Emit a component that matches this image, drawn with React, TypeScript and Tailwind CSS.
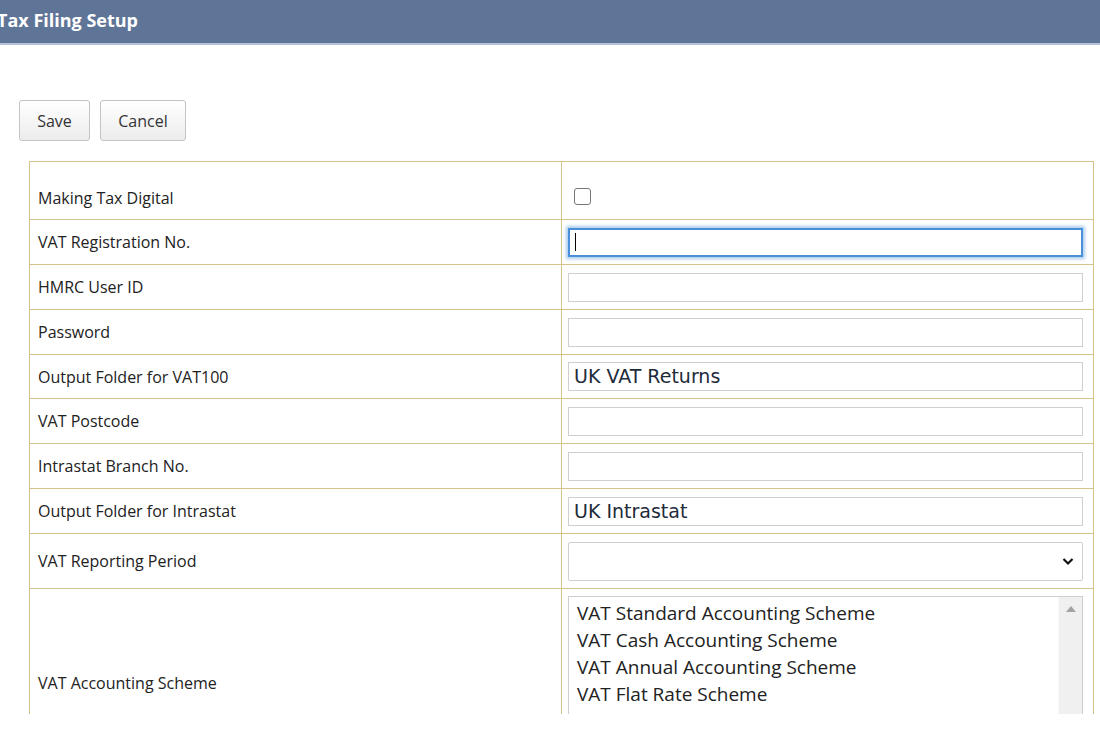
import React from "react";

const sans = { fontFamily: '"Open Sans", "Liberation Sans", sans-serif' };

const rows: { label: string; value?: string; focus?: boolean; h: string }[] = [
  { label: "VAT Registration No.", focus: true, h: "h-[45px]" },
  { label: "HMRC User ID", h: "h-[45px]" },
  { label: "Password", h: "h-[45px]" },
  { label: "Output Folder for VAT100", value: "UK VAT Returns", h: "h-[44px]" },
  { label: "VAT Postcode", h: "h-[45px]" },
  { label: "Intrastat Branch No.", h: "h-[45px]" },
  { label: "Output Folder for Intrastat", value: "UK Intrastat", h: "h-[45px]" },
];

const schemes = [
  "VAT Standard Accounting Scheme",
  "VAT Cash Accounting Scheme",
  "VAT Annual Accounting Scheme",
  "VAT Flat Rate Scheme",
  "VAT Retail Scheme",
  "VAT Margin Scheme",
];

function TextBox({ value, focus }: { value?: string; focus?: boolean }) {
  return (
    <div
      className={
        "relative flex h-[29px] w-[515px] items-center bg-white px-[5px] text-[19px] text-[#1d2b3a] " +
        (focus
          ? "border-2 border-[#4a90d9] shadow-[0_0_3px_2px_rgba(74,144,217,0.45)]"
          : "border border-[#cfcfcf]")
      }
      style={{ fontFamily: '"DejaVu Sans", Verdana, sans-serif' }}
    >
      {focus && <span className="h-[18px] w-px bg-black" />}
      {value}
    </div>
  );
}

export default function App() {
  return (
    <div className="h-[714px] overflow-hidden bg-white" style={sans}>
      {/* title bar */}
      <div className="flex h-[45px] items-center border-b-2 border-[#b4c3d9] bg-[#5f7597]">
        <h1 className="ml-[-3px] pb-[3px] text-[18px] font-bold text-white">Tax Filing Setup</h1>
      </div>

      {/* actions */}
      <div className="ml-[19px] mt-[55px] flex gap-[10px]">
        <button className="h-[41px] w-[71px] rounded-[3px] border border-[#c4c4c4] bg-gradient-to-b from-white to-[#ececec] text-[16px] text-[#333]">
          Save
        </button>
        <button className="h-[41px] w-[86px] rounded-[3px] border border-[#c4c4c4] bg-gradient-to-b from-white to-[#ececec] text-[16px] text-[#333]">
          Cancel
        </button>
      </div>

      <table className="ml-[29px] mt-[20px] w-[1064px] table-fixed border-collapse text-[16px] text-[#222]">
        <colgroup>
          <col className="w-[532px]" />
          <col className="w-[532px]" />
        </colgroup>
        <tbody>
          <tr className="h-[58px]">
            <td className="border border-[#d4c48c] px-[8px] pt-[14px]">Making Tax Digital</td>
            <td className="border border-[#d4c48c] px-[12px] pt-[12px]">
              <div className="h-[17px] w-[17px] rounded-[3px] border border-[#767676] bg-white" />
            </td>
          </tr>
          {rows.map((r) => (
            <tr key={r.label} className={r.h}>
              <td className="border border-[#d4c48c] px-[8px]">{r.label}</td>
              <td className="border border-[#d4c48c] px-[6px]">
                <TextBox value={r.value} focus={r.focus} />
              </td>
            </tr>
          ))}
          <tr className="h-[55px]">
            <td className="border border-[#d4c48c] px-[8px]">VAT Reporting Period</td>
            <td className="border border-[#d4c48c] px-[6px]">
              <div className="flex h-[39px] w-[515px] items-center justify-end rounded-[2px] border border-[#cfcfcf] bg-white pr-[7px]">
                <svg width="14" height="14" viewBox="0 0 14 14">
                  <path d="M2.5 5 L7 9.5 L11.5 5" fill="none" stroke="#111" strokeWidth="2.2" />
                </svg>
              </div>
            </td>
          </tr>
          <tr className="h-[188px]">
            <td className="border border-[#d4c48c] px-[8px]">VAT Accounting Scheme</td>
            <td className="border border-[#d4c48c] px-[6px]">
              <div className="flex h-[174px] w-[515px] border border-[#cfcfcf] bg-white">
                <div className="flex-1 overflow-hidden pl-[8px] pt-[3px] text-[19px] leading-[27.3px] text-[#222]">
                  {schemes.map((s) => (
                    <div key={s}>{s}</div>
                  ))}
                </div>
                <div className="flex w-[24px] justify-center border-l border-[#f7f7f7] bg-[#f0f0f0] pt-[9px]">
                  <svg width="10" height="6" viewBox="0 0 10 6">
                    <path d="M0 6 L5 0 L10 6 Z" fill="#a3a3a3" />
                  </svg>
                </div>
              </div>
            </td>
          </tr>
        </tbody>
      </table>
    </div>
  );
}
